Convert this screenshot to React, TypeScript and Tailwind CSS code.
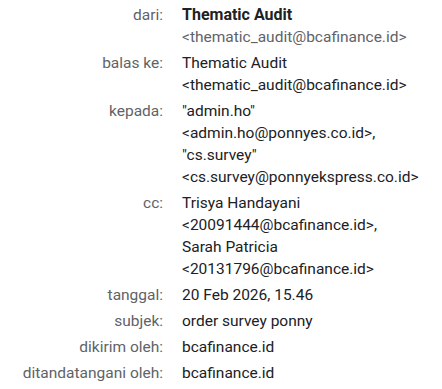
import React from "react";

type Row = { label: string; lines: React.ReactNode[] };

const rows: Row[] = [
  {
    label: "dari:",
    lines: [
      <span className="font-bold text-[#202124] text-[16px]">Thematic Audit</span>,
      <span className="text-[#5f6368]">&lt;thematic_audit@bcafinance.id&gt;</span>,
    ],
  },
  { label: "balas ke:", lines: ["Thematic Audit", "<thematic_audit@bcafinance.id>"] },
  {
    label: "kepada:",
    lines: ['"admin.ho"', "<admin.ho@ponnyes.co.id>,", '"cs.survey"', "<cs.survey@ponnyekspress.co.id>"],
  },
  {
    label: "cc:",
    lines: ["Trisya Handayani", "<20091444@bcafinance.id>,", "Sarah Patricia", "<20131796@bcafinance.id>"],
  },
  { label: "tanggal:", lines: ["20 Feb 2026, 15.46"] },
  { label: "subjek:", lines: ["order survey ponny"] },
  { label: "dikirim oleh:", lines: ["bcafinance.id"] },
  { label: "ditandatangani oleh:", lines: ["bcafinance.id"] },
];

export default function App() {
  return (
    <div
      className="w-[442px] h-[389px] bg-white overflow-hidden pt-[4px] text-[15.5px] leading-[22px] text-[#202124]"
      style={{ fontFamily: "Roboto, 'Noto Sans', sans-serif" }}
    >
      <div className="grid grid-cols-[163px_1fr] gap-x-[19px] gap-y-[4px]">
        {rows.map((r) => (
          <React.Fragment key={r.label}>
            <div className="text-right text-[#5f6368] whitespace-nowrap">{r.label}</div>
            <div className="flex flex-col">
              {r.lines.map((l, i) => (
                <div key={i} className="whitespace-nowrap">
                  {l}
                </div>
              ))}
            </div>
          </React.Fragment>
        ))}
      </div>
    </div>
  );
}
